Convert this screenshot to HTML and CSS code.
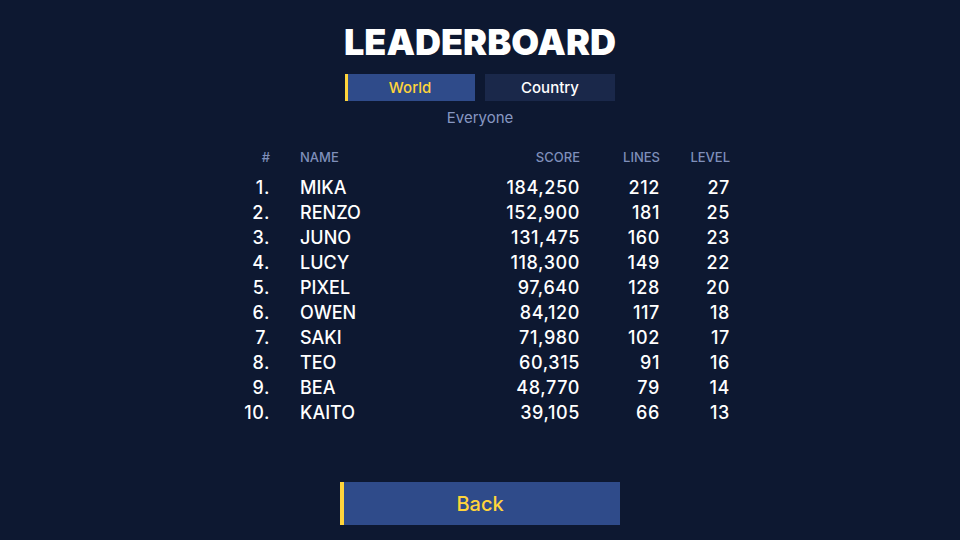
FILE: index.html
```html
<!DOCTYPE html>
<html>
<head>
<meta charset="utf-8">
<link rel="stylesheet" href="styles.css">
</head>
<body>
<main class="screen">
  <h1 class="title">LEADERBOARD</h1>
  <div class="tabs">
    <div class="tab tab-active">World</div>
    <div class="tab">Country</div>
  </div>
  <div class="filter">Everyone</div>
  <div class="table">
    <div class="row head">
      <span class="c-rank">#</span><span class="c-name">NAME</span><span class="c-num">SCORE</span><span class="c-num">LINES</span><span class="c-num">LEVEL</span>
    </div>
    <div class="rows">
      <div class="row"><span class="c-rank">1.</span><span class="c-name">MIKA</span><span class="c-num">184,250</span><span class="c-num">212</span><span class="c-num">27</span></div>
      <div class="row"><span class="c-rank">2.</span><span class="c-name">RENZO</span><span class="c-num">152,900</span><span class="c-num">181</span><span class="c-num">25</span></div>
      <div class="row"><span class="c-rank">3.</span><span class="c-name">JUNO</span><span class="c-num">131,475</span><span class="c-num">160</span><span class="c-num">23</span></div>
      <div class="row"><span class="c-rank">4.</span><span class="c-name">LUCY</span><span class="c-num">118,300</span><span class="c-num">149</span><span class="c-num">22</span></div>
      <div class="row"><span class="c-rank">5.</span><span class="c-name">PIXEL</span><span class="c-num">97,640</span><span class="c-num">128</span><span class="c-num">20</span></div>
      <div class="row"><span class="c-rank">6.</span><span class="c-name">OWEN</span><span class="c-num">84,120</span><span class="c-num">117</span><span class="c-num">18</span></div>
      <div class="row"><span class="c-rank">7.</span><span class="c-name">SAKI</span><span class="c-num">71,980</span><span class="c-num">102</span><span class="c-num">17</span></div>
      <div class="row"><span class="c-rank">8.</span><span class="c-name">TEO</span><span class="c-num">60,315</span><span class="c-num">91</span><span class="c-num">16</span></div>
      <div class="row"><span class="c-rank">9.</span><span class="c-name">BEA</span><span class="c-num">48,770</span><span class="c-num">79</span><span class="c-num">14</span></div>
      <div class="row"><span class="c-rank">10.</span><span class="c-name">KAITO</span><span class="c-num">39,105</span><span class="c-num">66</span><span class="c-num">13</span></div>
    </div>
  </div>
  <div class="spacer"></div>
  <button class="back">Back</button>
</main>
</body>
</html>
```
FILE: styles.css
```css
html, body {
  margin: 0;
  padding: 0;
  background: #0d1831;
}
.screen {
  width: 960px;
  height: 540px;
  display: flex;
  flex-direction: column;
  align-items: center;
  font-family: Inter, "Noto Sans", sans-serif;
  color: #ffffff;
  box-sizing: border-box;
  padding-top: 24px;
}
.title {
  margin: 0;
  font-size: 36px;
  line-height: 36px;
  font-weight: 900;
  letter-spacing: 0;
}
.tabs {
  display: flex;
  gap: 10px;
  margin-top: 14px;
}
.tab {
  width: 130px;
  height: 27px;
  box-sizing: border-box;
  background: #1a284a;
  display: flex;
  align-items: center;
  justify-content: center;
  font-size: 15px;
  font-weight: 500;
  color: #ffffff;
}
.tab-active {
  background: #2f4b8a;
  border-left: 3px solid #ffd43b;
  padding-right: 3px;
  color: #ffd43b;
}
.filter {
  margin-top: 7px;
  font-size: 15px;
  line-height: 20px;
  color: #8797c2;
}
.table {
  width: 500px;
  padding-left: 10px;
  box-sizing: border-box;
  margin-top: 21px;
}
.row {
  display: grid;
  grid-template-columns: 30px 230px 80px 80px 70px;
  font-size: 18px;
  line-height: 25px;
  font-weight: 500;
}
.row .c-name {
  padding-left: 30px;
}
.rows .c-rank, .rows .c-num {
  letter-spacing: 0.6px;
}
.head {
  font-size: 13px;
  line-height: 16px;
  color: #7f8fba;
  font-weight: 500;
}
.rows {
  margin-top: 10px;
}
.c-rank, .c-num {
  text-align: right;
}
.c-name {
  text-align: left;
}
.spacer {
  flex: 1;
}
.back {
  width: 280px;
  height: 43px;
  margin-bottom: 15px;
  border: none;
  border-left: 4px solid #ffd43b;
  background: #2f4b8a;
  color: #ffd43b;
  font-family: Inter, "Noto Sans", sans-serif;
  font-size: 20px;
  font-weight: 500;
  padding: 0 4px 0 0;
}
```
